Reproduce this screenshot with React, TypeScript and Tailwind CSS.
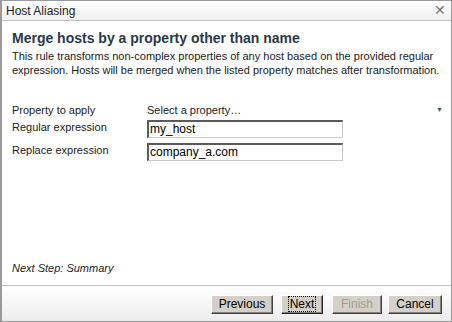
import React from "react";

const font = { fontFamily: '"Liberation Sans", Arial, sans-serif' };

const Field = ({ value }: { value: string }) => (
  <div className="h-[18px] w-[196px] border border-[#c8c8c8] border-t-[#5a5a5a] border-l-[#5a5a5a] border-t-2 border-l-2 bg-white pl-[1px] text-[12px] leading-[14px] text-black">
    {value}
  </div>
);

const Btn = ({
  label,
  w,
  disabled,
  focus,
}: {
  label: string;
  w: string;
  disabled?: boolean;
  focus?: boolean;
}) => (
  <button
    className={`h-[19px] ${w} bg-[#d4d0c8] text-[12px] leading-none border border-t-white border-l-white ${
      focus ? "border-[#222] border-t-[#222] border-l-[#222]" : "border-r-[#404040] border-b-[#404040]"
    } ${disabled ? "text-[#a09c94]" : "text-black"} shadow-[inset_-1px_-1px_0_#808080]`}
  >
    {focus ? (
      <span className="border border-dotted border-black px-[1px]">{label}</span>
    ) : (
      label
    )}
  </button>
);

const Row = ({ label, children, className = "" }: { label: string; children: React.ReactNode; className?: string }) => (
  <div className={`flex items-start ${className}`}>
    <span className="w-[135px] shrink-0">{label}</span>
    <div className="flex-1">{children}</div>
  </div>
);

export default function App() {
  return (
    <div
      className="w-[452px] h-[322px] border border-[#9a9a9a] border-l-2 bg-white flex flex-col text-[#222]"
      style={font}
    >
      <div className="h-[20px] flex items-center justify-between px-[4px] bg-gradient-to-b from-white to-[#efefef] border-b border-[#c0c0c0] text-[12px]">
        <span>Host Aliasing</span>
        <span className="text-[#777] text-[14px] mr-[1px]">✕</span>
      </div>
      <div className="flex-1 flex flex-col px-[10px] pt-[8px]">
        <h1 className="text-[14px] font-bold text-[#2b3848] leading-[18px]">
          Merge hosts by a property other than name
        </h1>
        <p className="text-[11px] leading-[14px] mt-[2px]">
          This rule transforms non-complex properties of any host based on the provided regular expression. Hosts will be merged when the listed property matches after transformation.
        </p>
        <div className="mt-[26px] flex flex-col text-[11px] leading-[14px]">
          <Row label="Property to apply">
            <div className="flex justify-between items-center">
              <span>Select a property…</span>
              <span className="text-[#3b5a78] text-[7px] mr-[-2px]">▼</span>
            </div>
          </Row>
          <Row label="Regular expression" className="mt-[3px]">
            <Field value="my_host" />
          </Row>
          <Row label="Replace expression" className="mt-[5px]">
            <Field value="company_a.com" />
          </Row>
        </div>
        <div className="flex-1" />
        <p className="italic text-[11px] mb-[9px]">Next Step: Summary</p>
      </div>
      <div className="h-[36px] border-t border-[#c0c0c0] bg-gradient-to-b from-white to-[#ececec] flex items-center justify-end pr-[9px] pt-[1px]">
        <Btn label="Previous" w="w-[62px]" />
        <div className="w-[8px]" />
        <Btn label="Next" w="w-[42px]" focus />
        <div className="w-[9px]" />
        <Btn label="Finish" w="w-[50px]" disabled />
        <div className="w-[6px]" />
        <Btn label="Cancel" w="w-[54px]" />
      </div>
    </div>
  );
}
